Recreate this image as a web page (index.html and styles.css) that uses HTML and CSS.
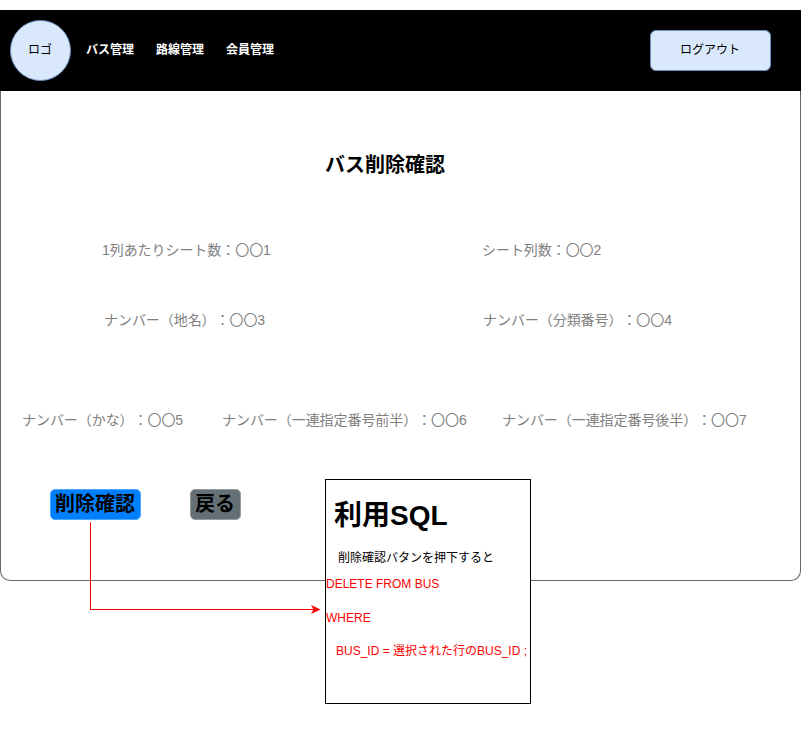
FILE: index.html
```html
<!DOCTYPE html>
<html lang="ja">
<head>
<meta charset="utf-8">
<title>バス削除確認</title>
<link rel="stylesheet" href="styles.css">
</head>
<body>
<div class="screen">
  <header class="header">
    <div class="logo">ロゴ</div>
    <nav class="nav">
      <span>バス管理</span>
      <span>路線管理</span>
      <span>会員管理</span>
    </nav>
    <div class="logout">ログアウト</div>
  </header>
  <main class="panel">
    <h1 class="title">バス削除確認</h1>
    <div class="row row-seats">
      <span>1列あたりシート数：〇〇1</span>
      <span>シート列数：〇〇2</span>
    </div>
    <div class="row row-plate">
      <span>ナンバー（地名）：〇〇3</span>
      <span>ナンバー（分類番号）：〇〇4</span>
    </div>
    <div class="row row-serial">
      <span>ナンバー（かな）：〇〇5</span>
      <span>ナンバー（一連指定番号前半）：〇〇6</span>
      <span>ナンバー（一連指定番号後半）：〇〇7</span>
    </div>
    <div class="actions">
      <div class="button button-delete">削除確認</div>
      <div class="button button-back">戻る</div>
    </div>
  </main>
  <svg class="arrow" width="240" height="100" viewBox="0 0 240 100">
    <path d="M5.5 2.5V89.5H229" fill="none" stroke="#f00"/>
    <path d="M235.5 89.5L226 94L228.5 89.5L226 85Z" fill="#f00"/>
  </svg>
  <aside class="note">
    <h2 class="note-title">利用SQL</h2>
    <p class="note-lead">削除確認バタンを押下すると</p>
    <p class="sql">DELETE FROM BUS</p>
    <p class="sql">WHERE</p>
    <p class="sql sql-indent">BUS_ID = 選択された行のBUS_ID ;</p>
  </aside>
</div>
</body>
</html>
```
FILE: styles.css
```css
* {
  box-sizing: border-box;
}

body {
  margin: 0;
  background: #fff;
  color: #000;
  font-family: "Liberation Sans", "Noto Sans CJK JP", sans-serif;
  font-size: 12px;
  text-spacing-trim: space-all;
  white-space: nowrap;
}

h1, h2, p {
  margin: 0;
}

.screen {
  position: relative;
  height: 730px;
  padding-top: 10px;
}

.header {
  display: flex;
  align-items: center;
  height: 81px;
  padding: 0 30px 0 10px;
  background: #000;
}

.logo, .logout {
  display: flex;
  align-items: center;
  justify-content: center;
  border: 1px solid #6c8ebf;
  background: #dae8fc;
  padding: 0 1px 5px 0;
}

.logo {
  width: 61px;
  height: 61px;
  border-radius: 50%;
}

.logout {
  width: 121px;
  height: 41px;
  margin-left: auto;
  border-radius: 6px;
}

.nav {
  display: flex;
  gap: 22px;
  margin-left: 15px;
  padding-bottom: 5px;
  color: #fff;
  font-weight: bold;
}

.panel {
  height: 490px;
  padding-top: 59px;
  border: 1px solid #666;
  border-top: 0;
  border-radius: 0 0 10px 10px;
}

.title {
  margin-left: 324px;
  font-size: 20px;
  line-height: 30px;
}

.row {
  display: grid;
  color: #808080;
  font-size: 14px;
  letter-spacing: -0.06px;
  line-height: 20px;
}

.row-seats {
  grid-template-columns: 380px auto;
  margin-top: 60px;
  padding-left: 101px;
}

.row-plate {
  grid-template-columns: 379px auto;
  margin-top: 50px;
  padding-left: 103px;
}

.row-serial {
  grid-template-columns: 200px 280px auto;
  margin-top: 80px;
  padding-left: 21px;
}

.actions {
  display: flex;
  gap: 49px;
  margin-top: 59px;
  padding-left: 49px;
}

.button {
  height: 31px;
  padding: 0 4px;
  border: 1px solid;
  border-radius: 5px;
  font-size: 20px;
  font-weight: bold;
  line-height: 29px;
}

.button-delete {
  width: 91px;
  border-color: #4da6ff;
  background: #0080ff;
}

.button-back {
  width: 51px;
  border-color: #949c9f;
  background: #647076;
}

.arrow {
  position: absolute;
  left: 85px;
  top: 520px;
}

.note {
  position: absolute;
  left: 325px;
  top: 479px;
  width: 206px;
  height: 225px;
  padding-top: 16px;
  border: 1px solid #000;
  background: #fff;
}

.note-title {
  padding-left: 8px;
  font-size: 28px;
  line-height: 40px;
}

.note-lead {
  margin: 13px 0 10px;
  padding-left: 12px;
  line-height: 18px;
}

.sql {
  height: 15px;
  margin-bottom: 18.5px;
  color: #f00;
  line-height: 15px;
}

.sql-indent {
  padding-left: 10px;
}
```
